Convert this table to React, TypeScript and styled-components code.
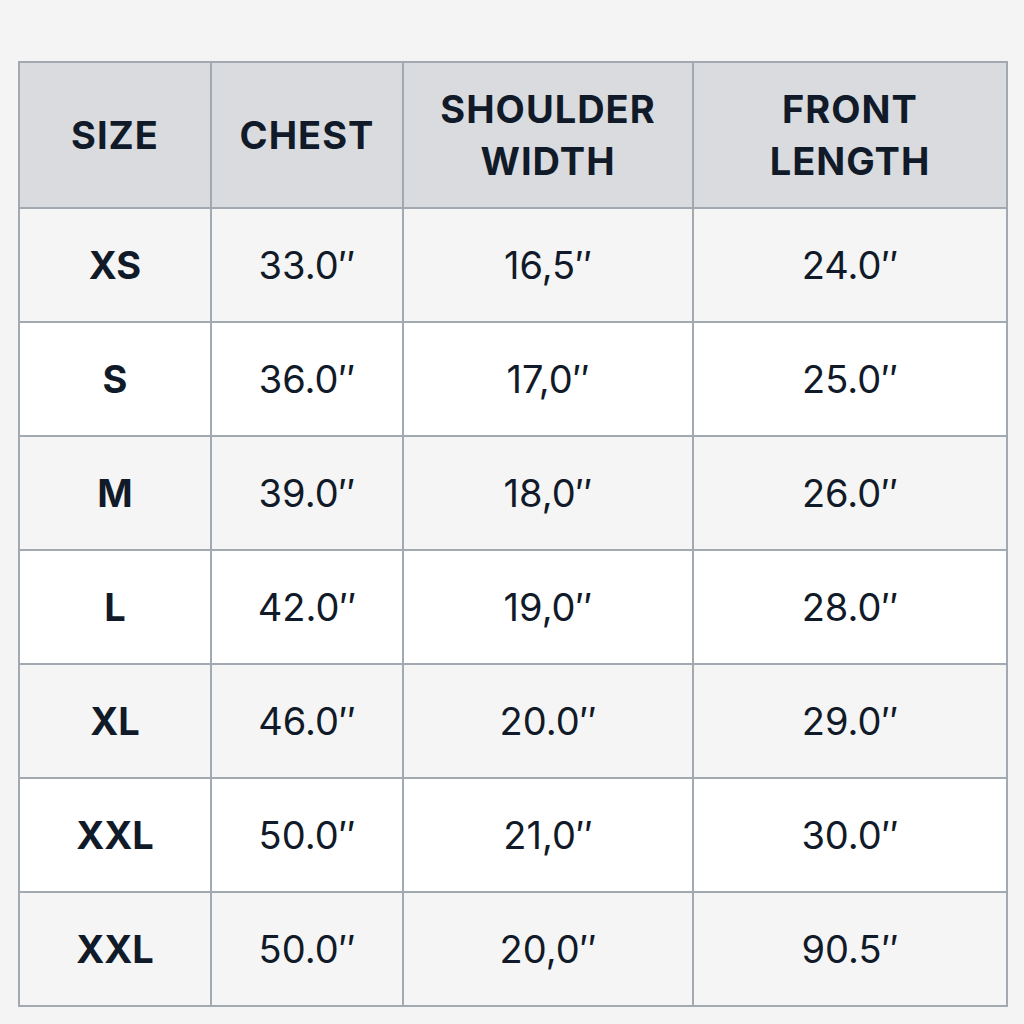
import styled, { createGlobalStyle } from "styled-components";

const GlobalStyle = createGlobalStyle`
    body {
        margin: 0;
        background: #f4f4f5;
        font-family: Inter, "Noto Sans", sans-serif;
    }
`;

const Page = styled.main`
    padding: 61px 18px 0 18px;
`;

const Table = styled.table`
    width: 988px;
    border-collapse: collapse;
    table-layout: fixed;
    border: 2px solid #a3a9b1;
`;

const HeadCell = styled.th`
    height: 144px;
    background: #d9dbdf;
    border: 2px solid #a3a9b1;
    color: #111a28;
    font-size: 38px;
    font-weight: 700;
    line-height: 52px;
    letter-spacing: 1px;
    text-align: center;
    padding: 0;
`;

const Row = styled.tr<{ $shade: boolean }>`
    background: ${({ $shade }) => ($shade ? "#f5f5f5" : "#ffffff")};
`;

const Cell = styled.td<{ $bold?: boolean }>`
    height: 112px;
    border: 2px solid #a3a9b1;
    color: #111a28;
    font-size: 38px;
    font-weight: ${({ $bold }) => ($bold ? 700 : 400)};
    text-align: center;
    padding: 0;
`;

const rows = [
    ["XS", "33.0″", "16,5″", "24.0″"],
    ["S", "36.0″", "17,0″", "25.0″"],
    ["M", "39.0″", "18,0″", "26.0″"],
    ["L", "42.0″", "19,0″", "28.0″"],
    ["XL", "46.0″", "20.0″", "29.0″"],
    ["XXL", "50.0″", "21,0″", "30.0″"],
    ["XXL", "50.0″", "20,0″", "90.5″"],
];

export default function App() {
    return (
        <>
            <GlobalStyle />
            <Page>
                <Table>
                    <colgroup>
                        <col style={{ width: 192 }} />
                        <col style={{ width: 192 }} />
                        <col style={{ width: 290 }} />
                        <col style={{ width: 314 }} />
                    </colgroup>
                    <thead>
                        <tr>
                            <HeadCell>SIZE</HeadCell>
                            <HeadCell>CHEST</HeadCell>
                            <HeadCell>SHOULDER<br />WIDTH</HeadCell>
                            <HeadCell>FRONT<br />LENGTH</HeadCell>
                        </tr>
                    </thead>
                    <tbody>
                        {rows.map((r, i) => (
                            <Row key={i} $shade={i % 2 === 0}>
                                <Cell $bold>{r[0]}</Cell>
                                <Cell>{r[1]}</Cell>
                                <Cell>{r[2]}</Cell>
                                <Cell>{r[3]}</Cell>
                            </Row>
                        ))}
                    </tbody>
                </Table>
            </Page>
        </>
    );
}
